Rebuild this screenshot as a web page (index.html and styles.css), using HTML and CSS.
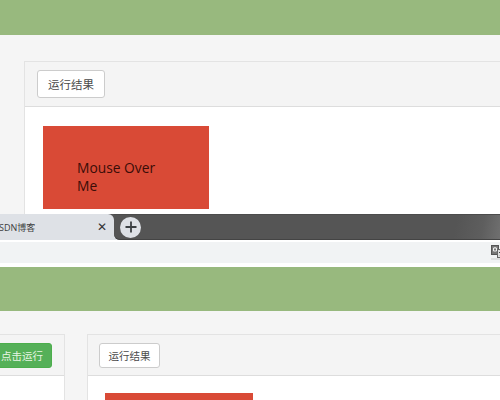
FILE: index.html
```
<!DOCTYPE html>
<html lang="zh">
<head>
<meta charset="utf-8">
<title>运行结果</title>
<link rel="stylesheet" href="styles.css">
</head>
<body>
<section class="page page-top">
  <div class="banner banner-top"></div>
  <div class="content content-top">
    <div class="panel panel-wide">
      <div class="panel-head head-top"><span class="btn btn-top">运行结果</span></div>
      <div class="panel-body body-top">
        <div class="box box-top"><p class="box-text">Mouse Over Me</p></div>
      </div>
    </div>
  </div>
</section>
<div class="tabbar">
  <div class="tab"><span class="tab-title">SDN博客</span><span class="tab-close">✕</span></div>
  <div class="tab-rest">
    <span class="newtab"><svg width="14" height="14" viewBox="0 0 14 14"><path d="M7 1.5v11M1.5 7h11" stroke="#3c4043" stroke-width="1.8" fill="none"/></svg></span>
  </div>
</div>
<div class="toolbar">
  <svg class="translate" width="14" height="15" viewBox="0 0 14 15"><rect x="0.5" y="0.5" width="7" height="9" fill="#777" stroke="#555"/><path d="M2.5 3h3v3h-3zM4 2v1" stroke="#eee" fill="none"/><rect x="6.5" y="4.5" width="7" height="8" fill="#ddd" stroke="#666"/><path d="M8 7.5h4M9 11l2-3" stroke="#444" fill="none"/><path d="M0 14h14" stroke="#ccc"/></svg>
</div>
<section class="page page-bottom">
  <div class="banner banner-bottom"></div>
  <div class="content content-bottom">
    <div class="panel panel-left">
      <div class="panel-head head-bottom head-end"><span class="btn btn-run">点击运行</span></div>
      <div class="panel-body"></div>
    </div>
    <div class="panel panel-wide">
      <div class="panel-head head-bottom"><span class="btn btn-bottom">运行结果</span></div>
      <div class="panel-body body-bottom"><div class="box box-bottom"></div></div>
    </div>
  </div>
</section>
</body>
</html>
```
FILE: styles.css
```
* { box-sizing: border-box; }
html, body { margin: 0; padding: 0; }
body {
  width: 500px;
  height: 400px;
  overflow: hidden;
  background: #fff;
  font-family: "Open Sans", "Noto Sans CJK SC", sans-serif;
  color: #4a4a4a;
}
.page { background: #f5f5f5; overflow: hidden; }
.page-top { height: 214px; }
.page-bottom { height: 133px; }
.banner { background: #98b97e; }
.banner-top { height: 35px; }
.banner-bottom { height: 44px; }
.content { display: flex; }
.content-top { padding: 26px 0 0 24px; }
.content-bottom { padding: 23px 0 0; gap: 22px; }
.panel {
  border: 1px solid #e3e3e3;
  border-right: 0;
  background: #fff;
}
.panel-wide { flex: 1; }
.panel-left {
  flex: none;
  width: 65px;
  border-left: 0;
  border-right: 1px solid #e3e3e3;
}
.panel-head {
  display: flex;
  background: #f4f4f4;
  border-bottom: 1px solid #ddd;
}
.head-top { height: 45px; padding: 8px 0 0 12px; }
.head-bottom { height: 41px; padding: 8px 0 0 11px; }
.head-end { justify-content: flex-end; padding: 8px 12px 0 0; }
.btn {
  display: flex;
  flex: none;
  align-items: center;
  justify-content: center;
  background: #fff;
  border: 1px solid #ccc;
  border-radius: 3px;
  white-space: nowrap;
}
.btn-top { width: 68px; height: 28px; font-size: 11.5px; }
.btn-bottom { width: 61px; height: 25px; font-size: 10.5px; }
.btn-run {
  width: 68px;
  height: 25px;
  font-size: 10.5px;
  color: #e8f5e4;
  background: #55b058;
  border-color: #4cae4c;
  justify-content: flex-end;
  padding-right: 8px;
}
.panel-body { height: 160px; }
.body-top { padding: 19px 0 0 18px; }
.body-bottom { padding: 17px 0 0 17px; }
.box { background: #d94a36; }
.box-top { width: 166px; height: 83px; padding: 33px 0 0 34px; }
.box-bottom { width: 148px; height: 40px; }
.box-text {
  margin: 0;
  width: 90px;
  font-size: 13.8px;
  line-height: 18px;
  color: #3a0d08;
}
.tabbar {
  display: flex;
  height: 26px;
  background: linear-gradient(180deg, #555 50%, #dee1e6 50%);
}
.tab {
  flex: none;
  width: 114px;
  display: flex;
  align-items: center;
  justify-content: space-between;
  padding-right: 7px;
  background: #dee1e6;
  border-radius: 0 6px 0 0;
  overflow: hidden;
}
.tab-title { font-size: 9px; color: #3c3c3c; margin-left: -1px; white-space: nowrap; }
.tab-close { font-size: 12px; line-height: 1; font-family: "DejaVu Sans", sans-serif; color: #333; font-weight: 700; }
.tab-rest {
  flex: 1;
  display: flex;
  align-items: center;
  padding-left: 6px;
  border-radius: 0 0 0 6px;
  background: linear-gradient(100deg, #555 88%, #5e5e5e 95%, #707070 100%);
  box-shadow: inset 0 -1px 0 #444, inset 0 1px 0 #4c4c4c;
}
.newtab {
  display: flex;
  align-items: center;
  justify-content: center;
  width: 21px;
  height: 21px;
  border-radius: 50%;
  background: #dee1e6;
}
.toolbar {
  display: flex;
  justify-content: flex-end;
  align-items: center;
  height: 27px;
  background: #f1f3f4;
  border-top: 2px solid #fff;
  border-bottom: 4px solid #fff;
  overflow: hidden;
}
.translate { flex: none; margin-right: -5px; }
```
